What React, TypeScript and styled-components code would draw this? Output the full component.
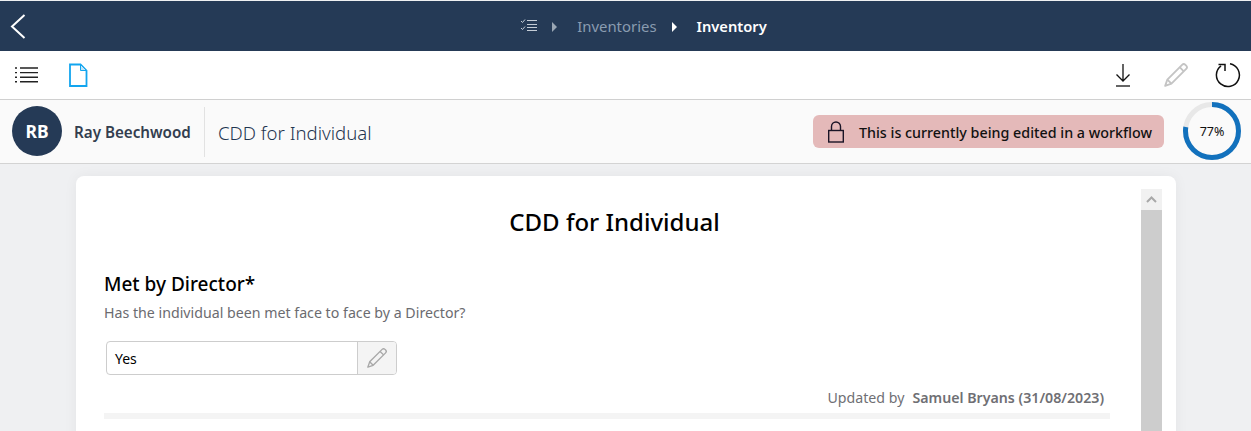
import styled, { createGlobalStyle } from "styled-components";

const GlobalStyle = createGlobalStyle`
  html, body {
    margin: 0;
    height: 100%;
    overflow: hidden;
    background: #eff0f2;
    font-family: "Noto Sans", "Open Sans", sans-serif;
  }
  #root { height: 100%; }
`;

const Page = styled.div`
  height: 431px;
  display: flex;
  flex-direction: column;
  overflow: hidden;
`;

const Header = styled.header`
  flex: none;
  height: 50px;
  margin-top: 1px;
  background: #253a56;
  display: flex;
  align-items: center;
  justify-content: center;
  position: relative;
`;

const BackButton = styled.button`
  position: absolute;
  left: 10px;
  top: 13px;
  padding: 0;
  border: 0;
  background: none;
  display: flex;
`;

const Crumbs = styled.nav`
  display: flex;
  align-items: center;
  height: 100%;
  padding-left: 36px;
  box-sizing: border-box;
`;

const Crumb = styled.span<{ $current?: boolean }>`
  font-size: ${(p) => (p.$current ? "14.7px" : "14.9px")};
  font-weight: ${(p) => (p.$current ? 600 : 400)};
  color: ${(p) => (p.$current ? "#ffffff" : "#8a9cb0")};
`;

const Arrow = styled.i<{ $light?: boolean }>`
  width: 0;
  height: 0;
  margin: 2px 20px 0 ${(p) => (p.$light ? "15px" : "14px")};
  border-left: 5px solid ${(p) => (p.$light ? "#ffffff" : "#9aa6b4")};
  border-top: 5px solid transparent;
  border-bottom: 5px solid transparent;
`;

const Toolbar = styled.div`
  flex: none;
  height: 48px;
  background: #fff;
  border-bottom: 1px solid #d0d0d0;
  display: flex;
  align-items: center;
  justify-content: space-between;
  padding: 0 10px 0 15px;
`;

const ToolGroup = styled.div<{ $gap: number }>`
  display: flex;
  align-items: center;
  gap: ${(p) => p.$gap}px;
`;

const Icon = styled.svg`
  display: block;
  flex: none;
`;

const DownloadIcon = styled(Icon)`
  margin-right: 6px;
`;

const InfoBar = styled.div`
  flex: none;
  height: 63px;
  background: #fafafa;
  border-bottom: 1px solid #d3d3d3;
  display: flex;
  align-items: center;
  padding: 0 10px 0 12px;
`;

const Avatar = styled.div`
  width: 50px;
  height: 50px;
  margin-bottom: 1px;
  border-radius: 50%;
  background: #253a56;
  color: #fff;
  font-size: 17.5px;
  font-weight: 700;
  display: flex;
  align-items: center;
  justify-content: center;
`;

const PersonName = styled.div`
  margin-left: 12px;
  width: 130px;
  height: 50px;
  line-height: 51px;
  border-right: 1px solid #e2e2e2;
  font-size: 15.2px;
  font-weight: 600;
  color: #333e4f;
`;

const RecordTitle = styled.div`
  margin-left: 13px;
  padding-top: 1px;
  flex: 1;
  font-size: 18.6px;
  font-weight: 300;
  color: #1f3550;
`;

const Lock = styled.div`
  width: 351px;
  height: 33px;
  box-sizing: border-box;
  border-radius: 6px;
  background: #e4b9b9;
  display: flex;
  align-items: center;
  padding-left: 15px;
  gap: 14px;
  font-size: 14.3px;
  font-weight: 500;
  color: #111;
`;

const LockText = styled.span`
  padding-top: 1px;
`;

const Progress = styled.div`
  position: relative;
  width: 58px;
  height: 58px;
  margin: 0 0 2px 19px;
  padding-top: 2px;
  box-sizing: border-box;
  display: flex;
  align-items: center;
  justify-content: center;
  font-size: 12.5px;
  color: #111;
`;

const Ring = styled.svg`
  position: absolute;
  inset: 0;
`;

const Content = styled.main`
  flex: 1;
  min-height: 0;
  padding: 12px 75px 0 76px;
`;

const Card = styled.section`
  height: 400px;
  background: #fff;
  border-radius: 8px;
  box-shadow: 0 0 14px rgba(0, 0, 0, 0.05);
  display: flex;
  padding: 13px 14px 0 28px;
`;

const Form = styled.div`
  flex: 1;
  min-width: 0;
  margin-right: 31px;
`;

const FormTitle = styled.h1`
  margin: 0;
  padding: 16px 0 0 15px;
  font-size: 24px;
  line-height: 33px;
  font-weight: 500;
  color: #000;
  text-align: center;
`;

const FieldLabel = styled.h2`
  margin: 33px 0 0;
  font-size: 19px;
  line-height: 26px;
  font-weight: 500;
  color: #000;
`;

const FieldHelp = styled.p`
  margin: 5px 0 0;
  padding-top: 1px;
  font-size: 14.2px;
  line-height: 19px;
  color: #6b6b70;
`;

const InputRow = styled.div`
  width: 291px;
  height: 34px;
  box-sizing: border-box;
  margin: 19px 0 0 2px;
  border: 1px solid #cdcdcd;
  border-radius: 4px;
  display: flex;
  overflow: hidden;
`;

const InputValue = styled.div`
  flex: 1;
  padding: 1px 0 0 8px;
  font-size: 14px;
  line-height: 31px;
  color: #000;
`;

const InputButton = styled.div`
  width: 38px;
  background: #f4f4f4;
  border-left: 1px solid #cdcdcd;
  display: flex;
  align-items: center;
  justify-content: center;
`;

const Updated = styled.div`
  margin-top: 12px;
  padding: 1px 6px 0 0;
  display: flex;
  justify-content: flex-end;
  gap: 8px;
  font-size: 14.2px;
  line-height: 19px;
  color: #6f6f74;
`;

const UpdatedBy = styled.strong`
  font-weight: 600;
`;

const Divider = styled.div`
  height: 6px;
  margin-top: 6px;
  background: #f4f4f4;
`;

const Scrollbar = styled.div`
  flex: none;
  width: 21px;
  display: flex;
  flex-direction: column;
  background: #cdcdcd;
`;

const ScrollUp = styled.div`
  height: 21px;
  background: #f1f1f1;
  display: flex;
  align-items: center;
  justify-content: center;
`;

const Pencil = ({ size, color, weight }: { size: number; color: string; weight: number }) => (
  <Icon width={size} height={size} viewBox="0 0 24 24" fill="none" stroke={color} strokeWidth={weight} strokeLinejoin="round">
    <path d="M17.6 2.6a2.2 2.2 0 0 1 3.1 0l.7.7a2.2 2.2 0 0 1 0 3.1L7.8 20 2 22l2-5.8z" />
    <path d="M15.4 4.8l3.8 3.8M4 16.2l3.8 3.8" />
  </Icon>
);

export default function App() {
  return (
    <Page>
      <GlobalStyle />
      <Header>
        <BackButton aria-label="Back">
          <Icon width="16" height="25" viewBox="0 0 16 25" fill="none" stroke="#fff" strokeWidth="2">
            <path d="M14.5 1 2 12.5 14.5 24" />
          </Icon>
        </BackButton>
        <Crumbs>
          <Icon width="18" height="14" viewBox="0 0 18 14" fill="none" stroke="#c4ccd6" strokeWidth="1">
            <path d="M7 1.5h10M7 5.5h10M7 8.5h10M7 11.5h10" />
            <path d="M1 2l1.5 1.5L5 .5M1 9 2.5 10.5 5 7.5" />
          </Icon>
          <Arrow />
          <Crumb>Inventories</Crumb>
          <Arrow $light />
          <Crumb $current>Inventory</Crumb>
        </Crumbs>
      </Header>

      <Toolbar>
        <ToolGroup $gap={29}>
          <Icon width="24" height="16" viewBox="0 0 24 16" stroke="#222" strokeWidth="1.4">
            <path d="M5 1h18M5 5.6h18M5 10.2h18M5 14.8h18" />
            <path d="M0 1h2M0 5.6h2M0 10.2h2M0 14.8h2" />
          </Icon>
          <Icon width="20" height="24" viewBox="0 0 20 24" fill="none" stroke="#12a5ef" strokeWidth="1.8">
            <path d="M2 1.5h10.5l6 6V23H2z" />
            <path d="M12.5 1.5v6h6z" fill="#c3e6f9" strokeWidth="1" />
          </Icon>
        </ToolGroup>
        <ToolGroup $gap={26}>
          <DownloadIcon width="16" height="24" viewBox="0 0 16 24" fill="none" stroke="#111" strokeWidth="1.3">
            <path d="M8 1v17M1.5 11.5 8 18l6.5-6.5" />
            <path d="M1 23h14" />
          </DownloadIcon>
          <Pencil size={26} color="#c4c4c4" weight={1.7} />
          <Icon width="26" height="26" viewBox="0 0 26 26" fill="none" stroke="#111" strokeWidth="1.5">
            <path d="M15 1.7A11.5 11.5 0 1 1 6 3.8" />
            <path d="M3.5 2.5H10V9" />
          </Icon>
        </ToolGroup>
      </Toolbar>

      <InfoBar>
        <Avatar>RB</Avatar>
        <PersonName>Ray Beechwood</PersonName>
        <RecordTitle>CDD for Individual</RecordTitle>
        <Lock>
          <Icon width="17" height="22" viewBox="0 0 17 22" fill="none" stroke="#1a1426" strokeWidth="1.4">
            <rect x="0.7" y="9.5" width="14.6" height="11.5" />
            <path d="M3.5 9.5V5.5a4.5 4.5 0 0 1 9 0v4" />
          </Icon>
          <LockText>This is currently being edited in a workflow</LockText>
        </Lock>
        <Progress>
          <Ring viewBox="0 0 58 58" fill="none" strokeWidth="5">
            <circle cx="29" cy="29" r="26.5" stroke="#e8e8e8" />
            <circle
              cx="29"
              cy="29"
              r="26.5"
              stroke="#1271bd"
              strokeDasharray={`${2 * Math.PI * 26.5 * 0.77} 1000`}
              transform="rotate(-90 29 29)"
            />
          </Ring>
          77%
        </Progress>
      </InfoBar>

      <Content>
        <Card>
          <Form>
            <FormTitle>CDD for Individual</FormTitle>
            <FieldLabel>Met by Director*</FieldLabel>
            <FieldHelp>Has the individual been met face to face by a Director?</FieldHelp>
            <InputRow>
              <InputValue>Yes</InputValue>
              <InputButton>
                <Pencil size={22} color="#a8a8a8" weight={1.5} />
              </InputButton>
            </InputRow>
            <Updated>
              <span>Updated by</span>
              <UpdatedBy>Samuel Bryans (31/08/2023)</UpdatedBy>
            </Updated>
            <Divider />
          </Form>
          <Scrollbar>
            <ScrollUp>
              <Icon width="11" height="7" viewBox="0 0 11 7" fill="none" stroke="#a8a8a8" strokeWidth="2">
                <path d="M1 6l4.5-4.5L10 6" />
              </Icon>
            </ScrollUp>
          </Scrollbar>
        </Card>
      </Content>
    </Page>
  );
}
